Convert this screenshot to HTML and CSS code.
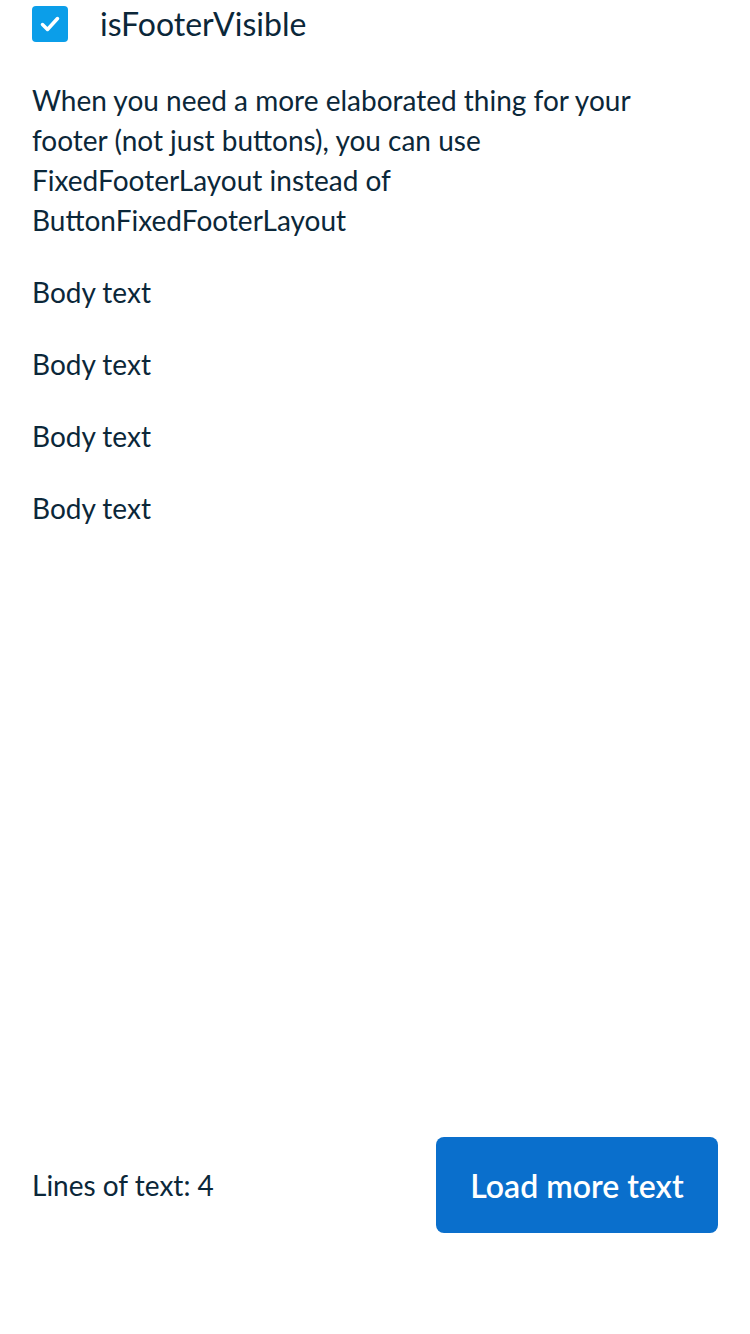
FILE: index.html
```html
<!DOCTYPE html>
<html lang="en">
<head>
<meta charset="utf-8">
<title>Fixed footer layout</title>
<link rel="stylesheet" href="styles.css">
</head>
<body>
<div class="page">
  <main class="content">
    <label class="check-row">
      <span class="check-box">
        <svg width="36" height="36" viewBox="0 0 36 36" aria-hidden="true"><path d="M10.5 18.5l5 5L25.5 12.5" fill="none" stroke="#fff" stroke-width="3.5" stroke-linecap="round" stroke-linejoin="round"/></svg>
      </span>
      <span class="check-label">isFooterVisible</span>
    </label>
    <p class="text">When you need a more elaborated thing for your footer (not just buttons), you can use FixedFooterLayout instead of ButtonFixedFooterLayout</p>
    <p class="text">Body text</p>
    <p class="text">Body text</p>
    <p class="text">Body text</p>
    <p class="text">Body text</p>
  </main>
  <footer class="footer">
    <span class="footer-text">Lines of text: 4</span>
    <button class="btn-primary" type="button">Load more text</button>
  </footer>
</div>
</body>
</html>
```

FILE: styles.css
```css
html, body {
  margin: 0;
  padding: 0;
  background: #fff;
}
body {
  font-family: Lato, "Open Sans", sans-serif;
  color: #0b2739;
}
.page {
  display: flex;
  flex-direction: column;
  min-height: 1334px;
}
.content {
  flex: 1;
  padding: 6px 32px 0 32px;
}
.check-row {
  display: flex;
  align-items: center;
  gap: 32px;
  height: 36px;
}
.check-box {
  width: 36px;
  height: 36px;
  border-radius: 4px;
  background: #0b9ee9;
  display: flex;
  align-items: center;
  justify-content: center;
}
.check-label {
  font-size: 32px;
  line-height: 40px;
}
.text {
  margin: 32px 0 0 0;
  max-width: 640px;
  font-size: 28px;
  line-height: 40px;
}
.content .text:first-of-type {
  margin-top: 38px;
}
.footer {
  display: flex;
  align-items: center;
  justify-content: space-between;
  padding: 0 32px 101px 32px;
}
.footer-text {
  font-size: 28px;
  line-height: 40px;
}
.btn-primary {
  width: 282px;
  height: 96px;
  border: 0;
  border-radius: 8px;
  background: #0a6fcc;
  color: #fff;
  font-family: Lato, "Open Sans", sans-serif;
  font-size: 32px;
  font-weight: 600;
  padding: 0;
}
```
